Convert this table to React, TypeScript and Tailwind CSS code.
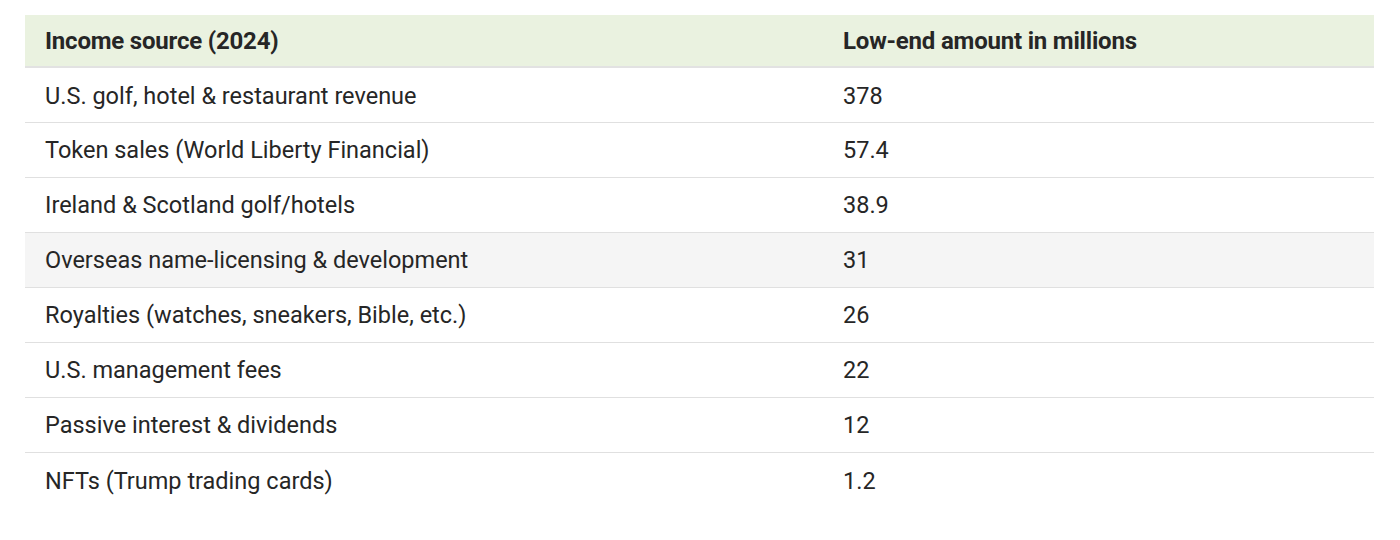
const rows = [
  ["U.S. golf, hotel & restaurant revenue", "378"],
  ["Token sales (World Liberty Financial)", "57.4"],
  ["Ireland & Scotland golf/hotels", "38.9"],
  ["Overseas name-licensing & development", "31"],
  ["Royalties (watches, sneakers, Bible, etc.)", "26"],
  ["U.S. management fees", "22"],
  ["Passive interest & dividends", "12"],
  ["NFTs (Trump trading cards)", "1.2"],
];

export default function App() {
  return (
    <div className="w-[1400px] h-[540px] bg-white pt-[15px] pl-[25px] font-['Roboto',sans-serif] text-[#262626]">
      <table className="w-[1349px] border-collapse text-[23.5px] leading-none">
        <thead>
          <tr className="bg-[#eaf2e0] border-b-2 border-[#e2e2e2]">
            <th className="w-[798px] h-[52px] pl-5 text-left text-[24px] font-bold tracking-[-0.2px]">Income source (2024)</th>
            <th className="h-[52px] pl-5 text-left text-[24px] font-bold tracking-[-0.2px]">Low-end amount in millions</th>
          </tr>
        </thead>
        <tbody>
          {rows.map(([name, amount], i) => (
            <tr
              key={name}
              className={
                (i === 3 ? "bg-[#f5f5f5] " : "") +
                (i < rows.length - 1 ? "border-b border-[#e0e0e0]" : "")
              }
            >
              <td className="h-[55px] pl-5 pt-[3px]">{name}</td>
              <td className="h-[55px] pl-5 pt-[3px]">{amount}</td>
            </tr>
          ))}
        </tbody>
      </table>
    </div>
  );
}
